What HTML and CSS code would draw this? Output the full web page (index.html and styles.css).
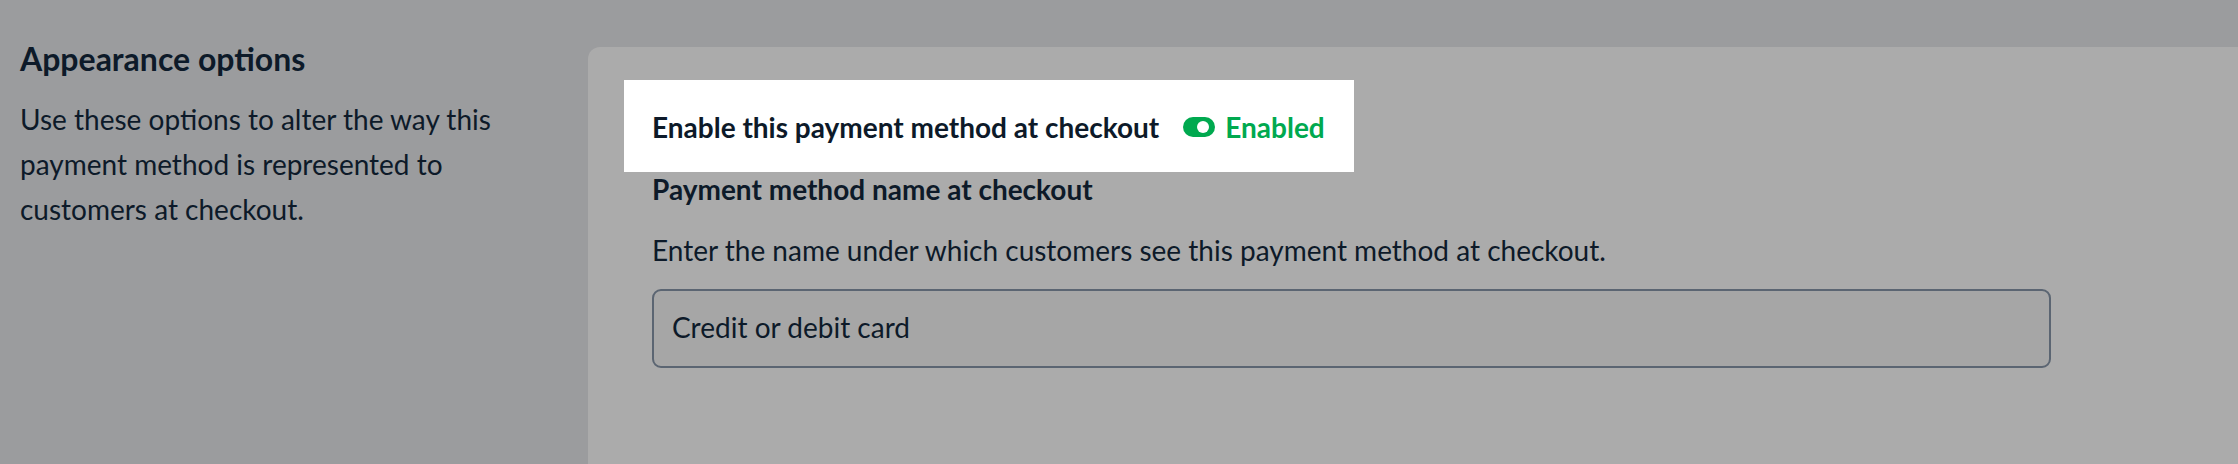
FILE: index.html
```html
<!DOCTYPE html>
<html lang="en">
<head>
<meta charset="utf-8">
<link rel="stylesheet" href="styles.css">
</head>
<body>
<div class="page">
  <aside class="intro">
    <h2 class="intro-title">Appearance options</h2>
    <p class="intro-text">Use these options to alter the way this payment method is represented to customers at checkout.</p>
  </aside>
  <section class="card">
    <div class="spotlight">
      <span class="row-label">Enable this payment method at checkout</span>
      <span class="status">
        <span class="toggle"><span class="knob"></span></span>
        <span class="status-text">Enabled</span>
      </span>
    </div>
    <div class="field">
      <div class="field-label">Payment method name at checkout</div>
      <div class="field-help">Enter the name under which customers see this payment method at checkout.</div>
      <div class="input">Credit or debit card</div>
    </div>
  </section>
</div>
</body>
</html>
```

FILE: styles.css
```css
* { box-sizing: border-box; }
html, body {
  margin: 0;
  padding: 0;
  background: #9b9c9e;
  height: 100%;
  overflow: hidden;
}
body {
  font-family: Lato, "Open Sans", sans-serif;
  color: #0d1a29;
}
.page {
  display: flex;
  align-items: flex-start;
  padding-top: 47px;
}
.intro {
  width: 588px;
  flex: none;
  padding-left: 20px;
  padding-right: 40px;
  margin-top: -1px;
}
.intro-title {
  margin: 0;
  font-size: 32px;
  font-weight: 700;
  line-height: 26px;
}
.intro-text {
  margin: 25px 0 0;
  font-size: 28px;
  line-height: 45px;
  width: 490px;
}
.card {
  flex: 1;
  background: #ababab;
  border-top-left-radius: 12px;
  min-height: 460px;
  padding: 33px 0 0 36px;
}
.spotlight {
  display: inline-flex;
  align-items: center;
  background: #ffffff;
  height: 92px;
  padding: 2px 28px 0;
  width: 730px;
}
.row-label {
  font-size: 28px;
  font-weight: 700;
}
.status {
  display: inline-flex;
  align-items: center;
  margin-left: 24px;
  color: #00a94f;
}
.toggle {
  width: 32px;
  height: 20px;
  border-radius: 10px;
  background: #00a94f;
  display: flex;
  align-items: center;
  justify-content: flex-end;
  padding-right: 6px;
}
.knob {
  width: 12px;
  height: 12px;
  border-radius: 50%;
  background: #ffffff;
}
.status-text {
  margin-left: 10px;
  font-size: 28px;
  font-weight: 700;
}
.field {
  padding-left: 28px;
}
.field-label {
  font-size: 28px;
  font-weight: 700;
  line-height: 36px;
  margin-top: -1px;
}
.field-help {
  margin-top: 25px;
  font-size: 28px;
  line-height: 36px;
}
.input {
  margin-top: 21px;
  width: 1399px;
  height: 79px;
  border: 2px solid #5b6572;
  border-radius: 9px;
  background: #a6a6a6;
  display: flex;
  align-items: center;
  padding: 0 0 3px 18px;
  font-size: 28px;
}
```
